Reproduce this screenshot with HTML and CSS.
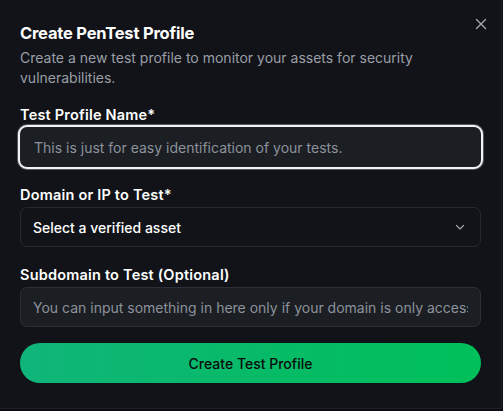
FILE: index.html
```html
<!DOCTYPE html>
<html lang="en">
<head>
    <meta charset="UTF-8">
    <meta name="viewport" content="width=device-width, initial-scale=1.0">
    <title>Create PenTest Profile</title>
    <link rel="stylesheet" href="styles.css">
</head>
<body>
    <div class="modal">
        <button class="closeBtn" aria-label="Close">
            <svg width="12" height="12" viewBox="0 0 12 12">
                <path d="M1.5 1.5 L10.5 10.5 M10.5 1.5 L1.5 10.5" stroke="currentColor" stroke-width="1.4" stroke-linecap="round"/>
            </svg>
        </button>

        <h2 class="title">Create PenTest Profile</h2>
        <p class="desc">Create a new test profile to monitor your assets for security vulnerabilities.</p>

        <form class="form">
            <div class="field">
                <label for="profileName">Test Profile Name*</label>
                <input type="text" id="profileName" class="input focused" placeholder="This is just for easy identification of your tests.">
            </div>

            <div class="field">
                <label>Domain or IP to Test*</label>
                <div class="select">
                    <span>Select a verified asset</span>
                    <svg width="12" height="12" viewBox="0 0 12 12">
                        <path d="M2.5 4.5 L6 8 L9.5 4.5" fill="none" stroke="currentColor" stroke-width="1.2" stroke-linecap="round" stroke-linejoin="round"/>
                    </svg>
                </div>
            </div>

            <div class="field">
                <label for="subdomain">Subdomain to Test (Optional)</label>
                <input type="text" id="subdomain" class="input" placeholder="You can input something in here only if your domain is only accessible through a subdomain.">
            </div>

            <button type="button" class="submitBtn">Create Test Profile</button>
        </form>
    </div>
</body>
</html>
```

FILE: styles.css
```css
html, body {
    margin: 0;
    background-color: #0b0c0f;
    font-family: "Inter", "Open Sans", sans-serif;
}
.modal {
    position: relative;
    box-sizing: border-box;
    width: 502px;
    height: 409px;
    padding: 21px 20px 0 20px;
    background-color: #111318;
    border: 1px solid #1f2228;
    border-top: none;
    border-left: none;
}
.closeBtn {
    position: absolute;
    top: 18px;
    right: 14px;
    background: none;
    border: none;
    padding: 0;
    color: #a3a7ae;
    cursor: pointer;
}
.title {
    margin: 0;
    color: #ffffff;
    font-size: 16.5px;
    font-weight: 700;
    line-height: 24px;
    letter-spacing: -0.2px;
}
.desc {
    margin: 3px 0 0 0;
    color: #9a9fa7;
    font-size: 14px;
    line-height: 20px;
}
.form {
    display: flex;
    flex-direction: column;
    gap: 19px;
    margin-top: 18px;
}
.field {
    display: flex;
    flex-direction: column;
    gap: 3px;
}
.field > label {
    color: #ffffff;
    font-size: 14.5px;
    font-weight: 600;
    line-height: 18px;
    letter-spacing: 0.2px;
}
.input, .select {
    box-sizing: border-box;
    width: 100%;
    height: 40px;
    padding: 0 12px;
    border: 1px solid #2c2f36;
    border-radius: 7px;
    background-color: #1b1e23;
    color: #ffffff;
    font-family: inherit;
    font-size: 14px;
    outline: none;
}
.input::placeholder {
    color: #8d929b;
}
.input.focused {
    height: 44px;
    margin: -2px -2px;
    width: calc(100% + 4px);
    padding: 0 14px;
    border: 2px solid #f2f2f2;
    box-shadow: 0 0 0 1px #55585e;
    border-radius: 9px;
}
.select {
    display: flex;
    align-items: center;
    justify-content: space-between;
    background-color: #111318;
    border-color: #25282e;
    font-weight: 500;
}
.select > svg {
    color: #9ca1a8;
    margin-right: 2px;
}
.submitBtn {
    margin-top: -3px;
    height: 40px;
    border: none;
    border-radius: 20px;
    background: linear-gradient(90deg, #10b57a 0%, #07ba68 50%, #00c05a 100%);
    color: #0a0b0d;
    font-family: inherit;
    font-size: 14px;
    font-weight: 500;
    cursor: pointer;
}
```
